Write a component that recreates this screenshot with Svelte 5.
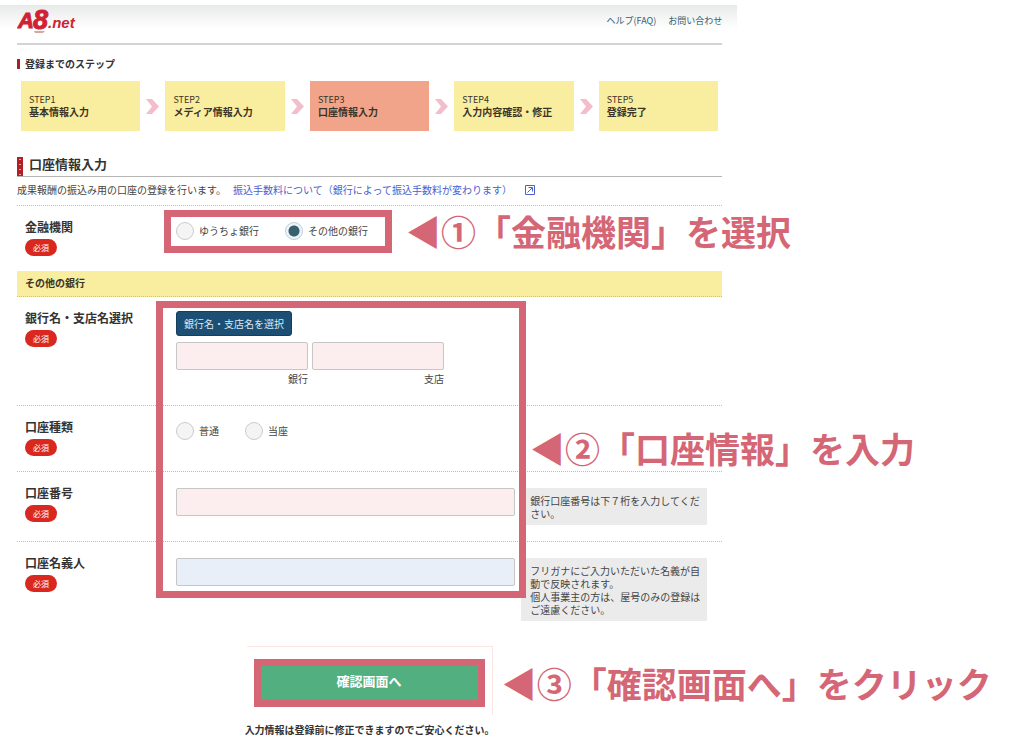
<script lang="ts">
	interface Step {
		name: string;
		current?: boolean;
	}

	const steps: Step[] = [
		{ name: '基本情報入力' },
		{ name: 'メディア情報入力' },
		{ name: '口座情報入力', current: true },
		{ name: '入力内容確認・修正' },
		{ name: '登録完了' }
	];

	let institution = $state('other');
	let accountType = $state('');
	let bankName = $state('');
	let branchName = $state('');
	let accountNumber = $state('');
	let accountHolder = $state('');

	function handleSubmit(event: SubmitEvent) {
		event.preventDefault();
	}
</script>

{#snippet required()}
	<span class="required">必須</span>
{/snippet}

<div class="page">
	<header class="header">
		<a class="header__logo" href="#top" aria-label="A8.net">
			<svg width="64" height="34" viewBox="0 0 64 34" aria-hidden="true">
				<g fill="#cf2233" font-family="'Liberation Sans', sans-serif" font-weight="700" font-style="italic">
					<text x="1" y="23" font-size="22" stroke="#cf2233" stroke-width="1">A</text>
					<text x="16" y="24" font-size="27" stroke="#cf2233">8</text>
					<text x="31" y="23" font-size="15">.net</text>
				</g>
				<path d="M17 26h11l-2 2h-8z" fill="#d9a59d" />
			</svg>
		</a>
		<nav class="header__nav">
			<a href="#faq">ヘルプ(FAQ)</a>
			<a href="#contact">お問い合わせ</a>
		</nav>
	</header>

	<main class="main">
		<h2 class="steps-title">登録までのステップ</h2>
		<ol class="steps">
			{#each steps as step, i}
				{#if i > 0}
					<li class="steps__arrow" aria-hidden="true">
						<svg width="13" height="15" viewBox="0 0 13 15">
							<path d="M0 0h6l7 7.500-7 7.500H0l6-7.500z" fill="#f3bdcb" />
						</svg>
					</li>
				{/if}
				<li class="step" class:step--current={step.current}>
					<span class="step__no">STEP{i + 1}</span>
					<span class="step__name">{step.name}</span>
				</li>
			{/each}
		</ol>

		<h1 class="title">口座情報入力</h1>
		<p class="lead">
			<span>成果報酬の振込み用の口座の登録を行います。</span>
			<a href="#fee">
				振込手数料について（銀行によって振込手数料が変わります）
				<svg width="10" height="10" viewBox="0 0 10 10" fill="none" stroke="#4a5fd0" aria-hidden="true">
					<path d="M.5 .5h9v9h-9z" />
					<path d="M2.500 7.500l4.500-4.500M3.500 2.500h4v4" />
				</svg>
			</a>
		</p>

		<form onsubmit={handleSubmit}>
			<div class="row">
				<div class="row__label" id="institution-label">
					<span class="row__name">金融機関</span>
					{@render required()}
				</div>
				<div class="radios radios--framed" role="radiogroup" aria-labelledby="institution-label">
					<label class="radio">
						<input type="radio" name="institution" value="yucho" bind:group={institution} />
						ゆうちょ銀行
					</label>
					<label class="radio">
						<input type="radio" name="institution" value="other" bind:group={institution} />
						その他の銀行
					</label>
				</div>
				<p class="note note--institution">◀①「金融機関」を選択</p>
			</div>

			<h3 class="subtitle">その他の銀行</h3>

			<div class="account">
				<div class="row row--bank">
					<div class="row__label">
						<span class="row__name">銀行名・支店名選択</span>
						{@render required()}
					</div>
					<div class="row__field row__field--bank">
						<button type="button" class="select-bank">銀行名・支店名を選択</button>
						<div class="bank">
							<label class="bank__item">
								<input class="input" type="text" bind:value={bankName} />
								銀行
							</label>
							<label class="bank__item">
								<input class="input" type="text" bind:value={branchName} />
								支店
							</label>
						</div>
					</div>
				</div>

				<div class="row">
					<div class="row__label" id="type-label">
						<span class="row__name">口座種類</span>
						{@render required()}
					</div>
					<div class="row__field">
						<div class="radios" role="radiogroup" aria-labelledby="type-label">
							<label class="radio">
								<input type="radio" name="type" value="ordinary" bind:group={accountType} />
								普通
							</label>
							<label class="radio">
								<input type="radio" name="type" value="current" bind:group={accountType} />
								当座
							</label>
						</div>
					</div>
				</div>

				<div class="row row--number">
					<div class="row__label">
						<label class="row__name" for="account-number">口座番号</label>
						{@render required()}
					</div>
					<div class="row__field row__field--hint">
						<input id="account-number" class="input" type="text" bind:value={accountNumber} />
						<p class="hint">銀行口座番号は下７桁を入力してください。</p>
					</div>
				</div>

				<div class="row">
					<div class="row__label">
						<label class="row__name" for="account-holder">口座名義人</label>
						{@render required()}
					</div>
					<div class="row__field row__field--hint">
						<input id="account-holder" class="input input--auto" type="text" bind:value={accountHolder} />
						<p class="hint">
							フリガナにご入力いただいた名義が自動で反映されます。<br />個人事業主の方は、屋号のみの登録はご遠慮ください。
						</p>
					</div>
				</div>

				<div class="account__frame"></div>
				<p class="note note--account">◀②「口座情報」を入力</p>
			</div>

			<div class="submit">
				<button type="submit" class="submit__button">確認画面へ</button>
				<p class="note note--submit">◀③「確認画面へ」をクリック</p>
			</div>
			<p class="submit-text">入力情報は登録前に修正できますのでご安心ください。</p>
		</form>
	</main>
</div>

<style>
	:global(body) {
		background: #fff;
	}

	.page {
		--pink: #d56676;
		--yellow: #f9eda0;
		--dotted: 1px dotted #bbb;
		box-sizing: border-box;
		width: 72%;
		padding-top: 5px;
		font-family: 'Noto Sans CJK JP', sans-serif;
		font-size: 10px;
		line-height: 12px;
		color: #444;
	}

	.page * {
		box-sizing: border-box;
	}

	h1,
	h2,
	h3,
	p,
	ol {
		margin: 0;
		padding: 0;
	}

	a {
		text-decoration: none;
	}

	.header {
		padding: 0 15px 0 17px;
		height: 38px;
		display: flex;
		justify-content: space-between;
		background: linear-gradient(#e8eae9, #fff 24px);
	}

	.header__logo svg {
		display: block;
	}

	.header__nav {
		display: flex;
		gap: 12px;
		padding-top: 10px;
		font-size: 9px;
	}

	.header__nav a {
		color: #35606f;
	}

	.main {
		margin: 0 15px 0 17px;
		border-top: 2px solid #d3d3d3;
	}

	.steps-title {
		margin-top: 14px;
		border-left: 3px solid #a02328;
		padding-left: 5px;
		font-size: 10px;
		line-height: 10px;
		color: #333;
	}

	.steps {
		display: flex;
		margin-top: 12px;
		padding: 0 4px;
		list-style: none;
	}

	.step {
		flex: 1;
		display: flex;
		flex-direction: column;
		height: 50px;
		padding: 13px 0 0 8px;
		background: var(--yellow);
		color: #3c3426;
		white-space: nowrap;
	}

	.step--current {
		background: #f1a48a;
	}

	.step__no {
		font-size: 9px;
	}

	.step__name {
		font-weight: 700;
	}

	.steps__arrow {
		display: flex;
		align-items: center;
		justify-content: center;
		width: 25px;
	}

	.title {
		position: relative;
		margin-top: 24px;
		border-bottom: 1px solid #b5b5b5;
		padding: 0 0 3px 12px;
		font-size: 13px;
		line-height: 18px;
		color: #333;
	}

	.title::before {
		content: '';
		position: absolute;
		left: 0;
		top: 2px;
		bottom: 0;
		width: 6px;
		background: radial-gradient(circle, #e9a9a9 1px, transparent 1px) 0 0 / 6px 5px #b02026;
	}

	.lead {
		display: flex;
		gap: 7px;
		padding: 7px 0 9px;
		border-bottom: var(--dotted);
		white-space: nowrap;
	}

	.lead a {
		display: flex;
		align-items: center;
		gap: 13px;
		color: #4a5fd0;
	}

	.row {
		position: relative;
		display: flex;
		align-items: flex-start;
		min-height: 65px;
	}

	.row--bank {
		min-height: 109px;
		border-bottom: var(--dotted);
	}

	.row--number {
		min-height: 71px;
		border-top: var(--dotted);
		border-bottom: var(--dotted);
	}

	.row__label {
		flex: 0 0 147px;
		display: flex;
		flex-direction: column;
		align-items: flex-start;
		gap: 4px;
		padding: 13px 0 0 8px;
	}

	.row__name {
		font-size: 12px;
		line-height: 16px;
		font-weight: 700;
		color: #333;
	}

	.required {
		width: 32px;
		border-radius: 9px;
		background: #d8281f;
		color: #fff;
		font-size: 8px;
		line-height: 17px;
		text-align: center;
	}

	.row__field {
		flex: 1;
		padding: 16px 0 0 12px;
	}

	.row__field--bank {
		padding-top: 14px;
	}

	.row__field--hint {
		display: flex;
		align-items: flex-start;
		gap: 6px;
		padding-right: 15px;
	}

	.row__field--hint .input {
		flex: 1;
		min-width: 0;
	}

	.radios {
		display: flex;
		align-items: center;
		gap: 26px;
	}

	.radios--framed {
		margin-top: 4px;
		border: 7px solid var(--pink);
		padding: 5px 17px 6px 5px;
		background: #fff;
	}

	.radio {
		display: flex;
		align-items: center;
		gap: 5px;
	}

	.radio input {
		appearance: none;
		width: 18px;
		height: 18px;
		margin: 0;
		border: 1px solid #ccc;
		border-radius: 50%;
		background: #f4f4f4;
	}

	.radio input:checked {
		border-color: #bfd0dc;
		background: radial-gradient(circle, #39606f 5px, #edf4fa 6px);
	}

	.subtitle {
		border-bottom: var(--dotted);
		padding: 6px 8px 7px;
		background: var(--yellow);
		font-size: 10px;
		color: #3c3426;
	}

	.account {
		position: relative;
	}

	.account__frame {
		position: absolute;
		top: 4px;
		right: 196px;
		bottom: 23px;
		left: 139px;
		border: 7px solid var(--pink);
		pointer-events: none;
	}

	.select-bank {
		display: block;
		height: 25px;
		border: 1px solid #143f5e;
		border-radius: 3px;
		padding: 0 7px;
		background: #1d4f74;
		color: #dbe8f0;
		font: inherit;
	}

	.bank {
		display: flex;
		gap: 4px;
		margin-top: 6px;
	}

	.bank__item {
		display: flex;
		flex-direction: column;
		gap: 3px;
		width: 132px;
		text-align: right;
	}

	.input {
		height: 28px;
		border: 1px solid #c6c6c6;
		border-radius: 2px;
		padding: 0 6px;
		background: #fceeef;
		font: inherit;
	}

	.input--auto {
		background: #e9eff8;
	}

	.hint {
		flex: 0 0 186px;
		padding: 6px 7px 5px 9px;
		background: #ebebeb;
		line-height: 13px;
	}

	.note {
		position: absolute;
		color: var(--pink);
		font-size: 35px;
		line-height: 36px;
		font-weight: 700;
		white-space: nowrap;
	}

	.note--institution {
		top: 7px;
		left: 389px;
	}

	.note--account {
		top: 133px;
		left: 513px;
	}

	.submit {
		position: relative;
		width: 246px;
		margin: 25px auto 0;
		border-top: 1px solid #fbe6e2;
		border-right: 1px solid #fbe6e2;
		padding: 12px 7px 8px;
	}

	.submit__button {
		display: block;
		width: 100%;
		height: 48px;
		border: 7px solid var(--pink);
		padding: 0 0 4px;
		background: #52af80;
		color: #fff;
		font: inherit;
		font-size: 13px;
		font-weight: 700;
	}

	.note--submit {
		top: 18px;
		left: 255px;
	}

	.submit-text {
		margin-top: 9px;
		font-weight: 700;
		text-align: center;
		color: #333;
	}
</style>
